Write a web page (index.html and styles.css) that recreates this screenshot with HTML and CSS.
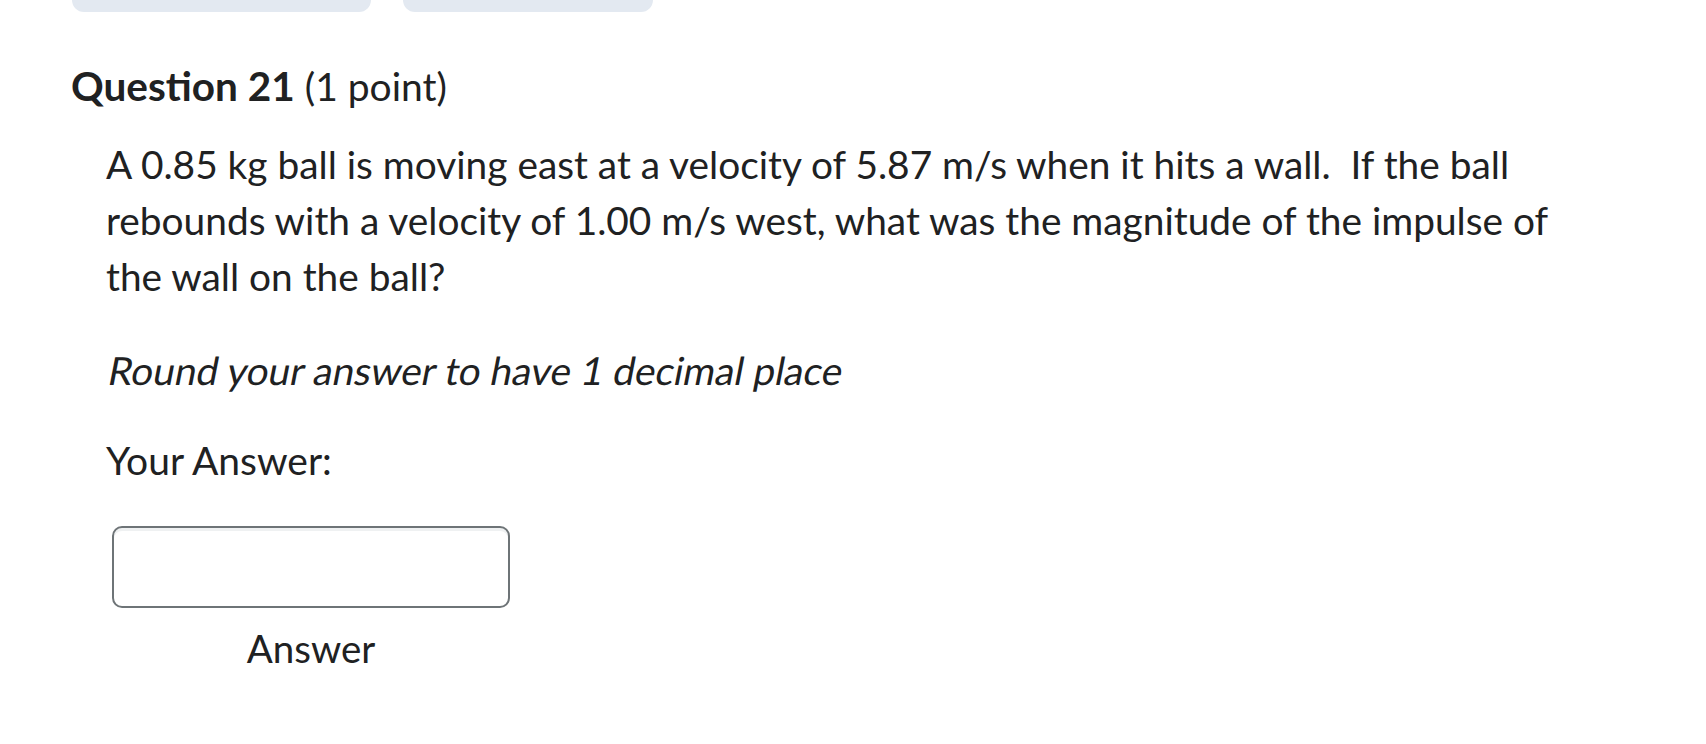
FILE: index.html
```html
<!DOCTYPE html>
<html lang="en">
<head>
<meta charset="utf-8">
<title>Question 21</title>
<link rel="stylesheet" href="styles.css">
</head>
<body>
<div class="tabs">
  <div class="tab tab-a"></div>
  <div class="tab tab-b"></div>
</div>
<section class="question">
  <h2 class="q-title"><strong>Question 21</strong> <span class="q-points">(1 point)</span></h2>
  <div class="q-body">
    <p class="q-text">A 0.85 kg ball is moving east at a velocity of 5.87 m/s when it hits a wall.&nbsp; If the ball rebounds with a velocity of 1.00 m/s west, what was the magnitude of the impulse of the wall on the ball?</p>
    <p class="q-note"><span class="q-note-text">Round your answer to have 1 decimal place</span></p>
    <p class="q-label">Your Answer:</p>
    <div class="answer-wrap">
      <input class="answer-input" type="text" aria-label="Answer">
      <span class="answer-caption">Answer</span>
    </div>
  </div>
</section>
</body>
</html>
```
FILE: styles.css
```css
html, body {
  margin: 0;
  padding: 0;
  background: #ffffff;
}
body {
  font-family: Lato, "Open Sans", "Liberation Sans", sans-serif;
  color: #202122;
  font-size: 39px;
}
.tabs {
  display: flex;
  gap: 32px;
  padding-left: 72px;
}
.tab {
  height: 12px;
  background: #e3e9f1;
  border-radius: 0 0 14px 14px;
}
.tab-a { width: 299px; }
.tab-b { width: 250px; }
.question {
  padding-left: 71px;
}
.q-title {
  margin: 50px 0 0 0;
  font-size: 39px;
  line-height: 48px;
  font-weight: 400;
}
.q-title strong {
  font-weight: 700;
  font-size: 40.5px;
}
.q-body {
  padding-left: 35px;
}
.q-text {
  margin: 26px 0 0 0;
  font-size: 38.85px;
  line-height: 56px;
  max-width: 1480px;
}
.q-note {
  margin: 38px 0 0 0;
  font-size: 38.75px;
  line-height: 56px;
}
.q-note-text {
  display: inline-block;
  transform: skewX(-11deg);
  transform-origin: 0 80%;
}
.q-label {
  margin: 34px 0 0 0;
  line-height: 56px;
}
.answer-wrap {
  display: inline-flex;
  flex-direction: column;
  align-items: center;
  margin: 38px 0 0 6px;
}
.answer-input {
  box-sizing: border-box;
  width: 398px;
  height: 82px;
  border: 2px solid #6e7477;
  border-radius: 10px;
  box-shadow: inset 0 3px 0 0 rgba(177, 185, 190, 0.2);
  background: #fff;
  margin: 0;
  padding: 0 16px;
  font: inherit;
}
.answer-caption {
  margin-top: 12px;
  font-size: 38.5px;
  line-height: 56px;
}
```
